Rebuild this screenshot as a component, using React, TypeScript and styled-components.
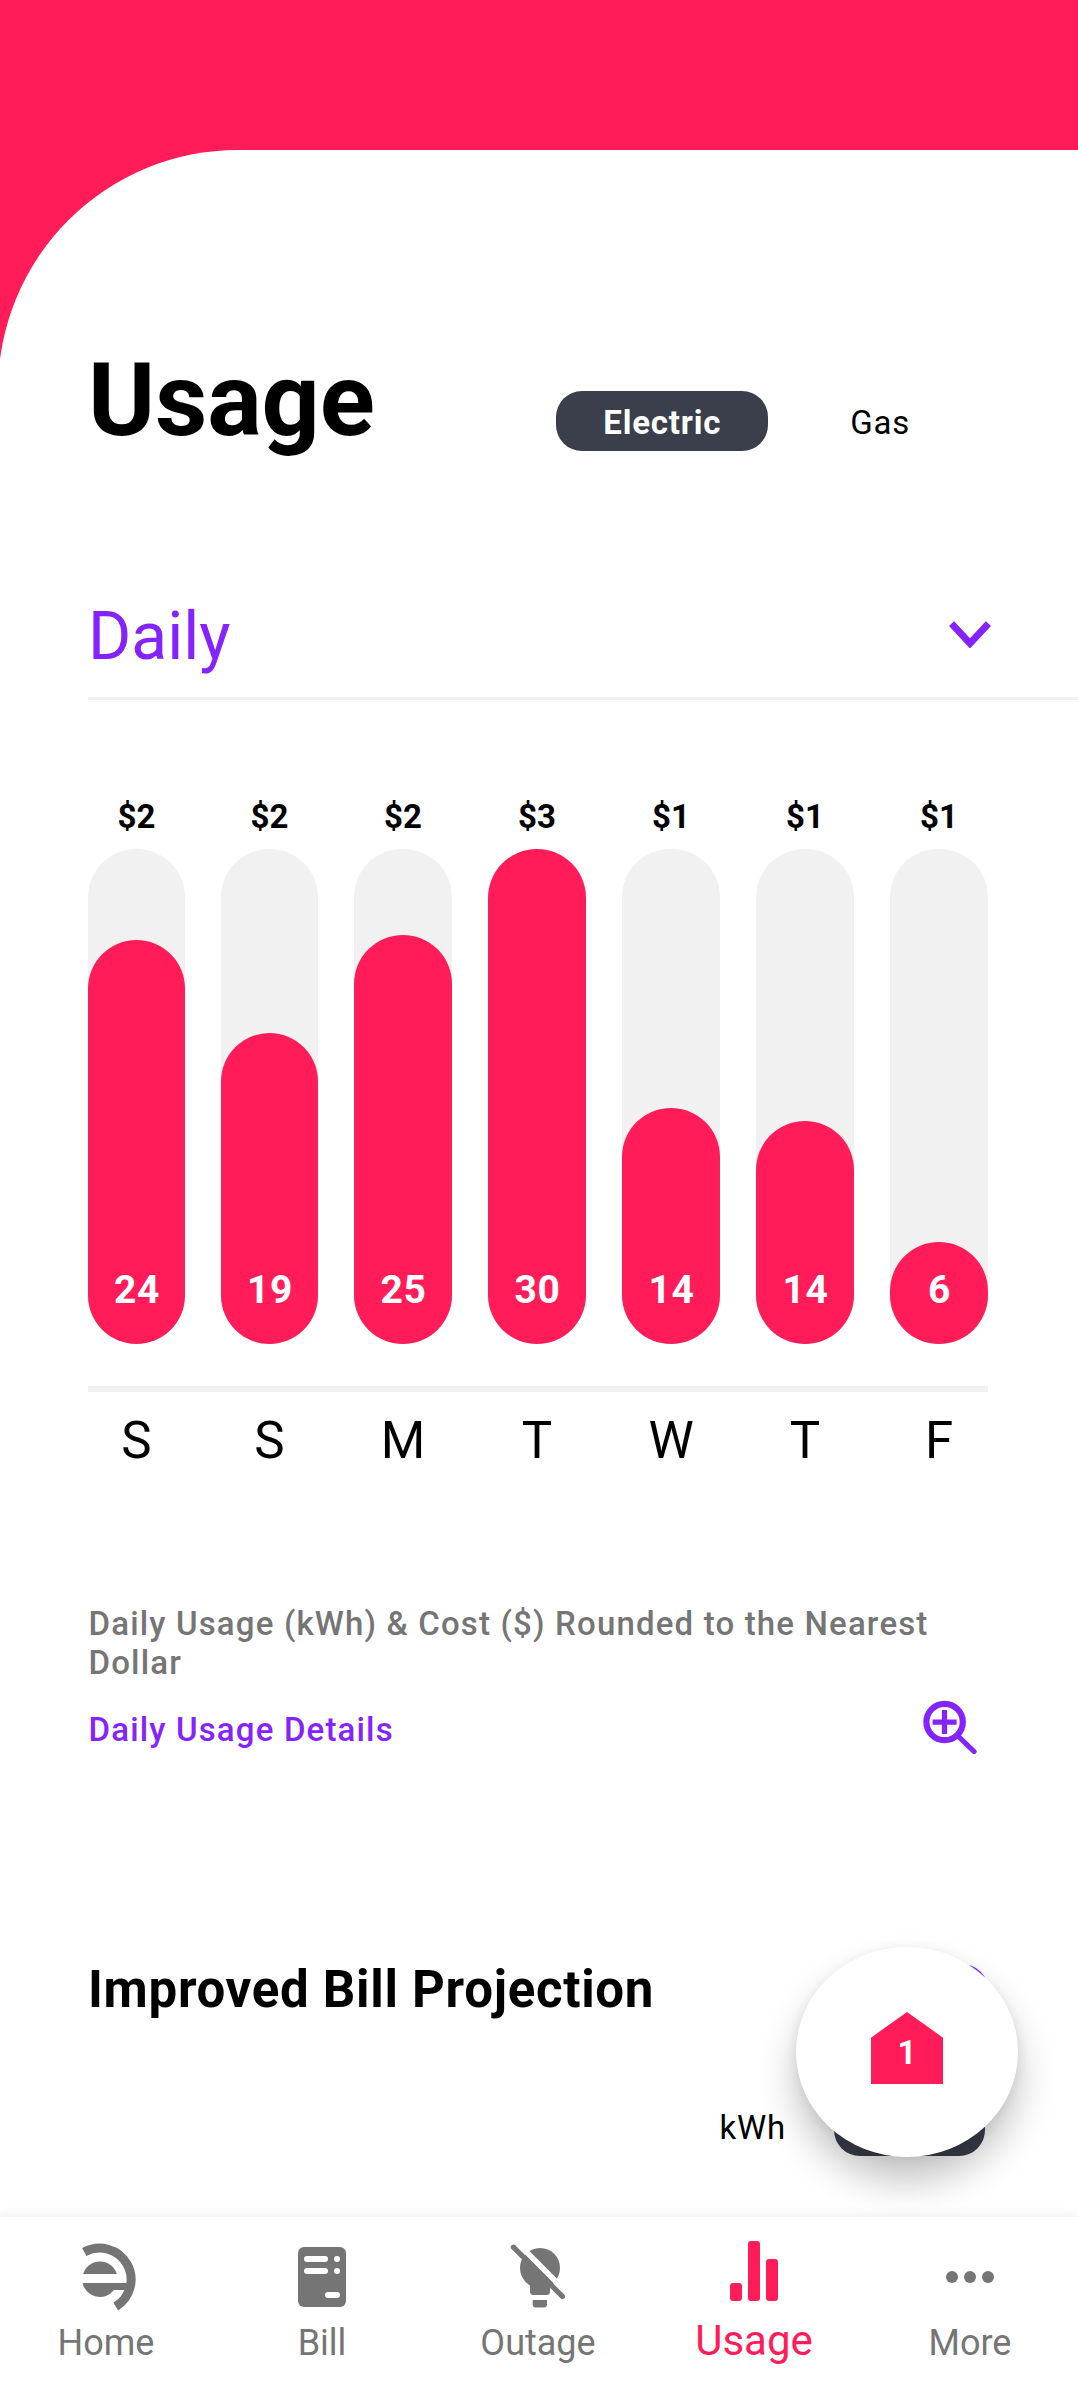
import React from "react";
import styled, { createGlobalStyle } from "styled-components";

const PINK = "#ff1c58";
const PURPLE = "#8523ff";
const SLATE = "#3b3f4c";
const GREY = "#757575";
const LINE = "#f1f1f1";

const Global = createGlobalStyle`
  * { box-sizing: border-box; }
  body { margin: 0; background: ${PINK}; font-family: Roboto, "Noto Sans", sans-serif; color: #000; }
`;

const Screen = styled.div`
  position: relative;
  display: flex;
  flex-direction: column;
  width: 1078px;
  height: 2383px;
  padding-top: 150px;
  overflow: hidden;
  background: ${PINK};
`;

const Sheet = styled.main`
  flex: 1;
  min-height: 0;
  margin-left: -2px;
  padding: 190px 0 0 90px;
  overflow: hidden;
  background: #fff;
  border-top-left-radius: 240px;
`;

const TitleRow = styled.header`
  display: flex;
  justify-content: space-between;
  height: 120px;
  padding-right: 92px;
`;

const Title = styled.h1`
  margin: 0;
  font-size: 102px;
  line-height: 120px;
  font-weight: 700;
  letter-spacing: -0.2px;
`;

const Toggle = styled.div<{ $top?: number }>`
  display: flex;
  gap: 6px;
  margin-top: ${(p) => p.$top ?? 0}px;
`;

const Option = styled.button<{ $active?: boolean; $width: number }>`
  width: ${(p) => p.$width}px;
  height: 60px;
  padding: 4px 0 0 0.5px;
  border: 0;
  border-radius: 26px;
  background: ${(p) => (p.$active ? SLATE : "transparent")};
  color: ${(p) => (p.$active ? "#fff" : "#000")};
  font-family: inherit;
  font-size: 33px;
  line-height: 56px;
  font-weight: ${(p) => (p.$active ? 700 : 400)};
  letter-spacing: 0.8px;
  text-align: center;
`;

const Select = styled.div`
  display: flex;
  justify-content: space-between;
  align-items: flex-start;
  height: 103px;
  margin-top: 137px;
  padding-right: 87px;
  border-bottom: 3px solid ${LINE};
  color: ${PURPLE};
  font-size: 66px;
  line-height: 80px;
`;

const Chevron = styled.svg`
  width: 42px;
  height: 27px;
  margin-top: 24px;
`;

const Chart = styled.section`
  width: 900px;
  padding-top: 97px;
`;

const Columns = styled.div`
  display: grid;
  grid-template-columns: 97px 97px repeat(5, 98px);
  column-gap: 36px;
`;

const Cost = styled.div`
  margin-bottom: 12px;
  font-size: 33px;
  line-height: 40px;
  font-weight: 700;
  text-align: center;
`;

const Track = styled.div`
  display: flex;
  flex-direction: column;
  justify-content: flex-end;
  height: 495px;
  border-radius: 48px;
  background: ${LINE};
`;

const Fill = styled.div`
  display: flex;
  align-items: flex-end;
  justify-content: center;
  padding: 0 0 31px 1px;
  border-radius: 49px;
  background: ${PINK};
  color: #fff;
  font-size: 39px;
  line-height: 46px;
  font-weight: 700;
  letter-spacing: 0.7px;
`;

const Axis = styled.div`
  height: 6px;
  margin: 42px 0 19px;
  background: ${LINE};
`;

const Day = styled.div`
  font-size: 51px;
  line-height: 60px;
  text-align: center;
`;

const Caption = styled.p`
  width: 900px;
  margin: 133px 0 18px;
  padding-left: 0.5px;
  color: ${GREY};
  font-size: 33px;
  line-height: 39px;
  font-weight: 500;
  letter-spacing: 1.16px;
`;

const DetailsRow = styled.div`
  display: flex;
  justify-content: space-between;
  height: 54px;
  padding-right: 101px;
`;

const DetailsLink = styled.a`
  padding: 10px 0 0 0.5px;
  color: ${PURPLE};
  font-size: 33px;
  line-height: 39px;
  font-weight: 500;
  letter-spacing: 1.16px;
`;

const ZoomIcon = styled.svg`
  width: 54px;
  height: 54px;
`;

const ProjectionRow = styled.div`
  display: flex;
  justify-content: space-between;
  height: 60px;
  margin-top: 206px;
  padding-right: 90.5px;
`;

const Heading = styled.h2`
  margin: 0;
  font-size: 51px;
  line-height: 60px;
  font-weight: 700;
  letter-spacing: 0.7px;
`;

const InfoIcon = styled.svg`
  width: 52px;
  height: 52px;
  margin-top: 3.5px;
`;

const UnitRow = styled.div`
  display: flex;
  justify-content: flex-end;
  margin-top: 76px;
  padding-right: 93px;
`;

const Fab = styled.button`
  position: absolute;
  left: 796px;
  top: 1947px;
  width: 222px;
  height: 210px;
  padding: 0;
  border: 0;
  border-radius: 50%;
  background: #fff;
  box-shadow: 0 24px 38px rgba(0, 0, 0, 0.24), 0 2px 12px rgba(0, 0, 0, 0.07);
`;

const House = styled.span`
  display: block;
  width: 72px;
  height: 72px;
  margin: 0 auto 8px;
  padding: 21px 0 0 0;
  clip-path: polygon(50% 0, 100% 35.6%, 100% 100%, 0 100%, 0 35.6%);
  background: ${PINK};
  color: #fff;
  font-family: Roboto, sans-serif;
  font-size: 33px;
  line-height: 40px;
  font-weight: 700;
  text-align: center;
`;

const Nav = styled.nav`
  position: relative;
  display: grid;
  grid-template-columns: repeat(5, 216px);
  flex: none;
  width: 1080px;
  height: 166px;
  margin-left: -2px;
  background: #fff;
  box-shadow: 0 0 12px rgba(0, 0, 0, 0.09);
`;

const Tab = styled.a<{ $active?: boolean }>`
  display: flex;
  flex-direction: column;
  align-items: center;
  padding-top: 22px;
  color: ${(p) => (p.$active ? PINK : GREY)};
`;

const TabIcon = styled.svg`
  display: block;
  width: 72px;
  height: 72px;
  fill: currentColor;
`;

const TabLabel = styled.span<{ $active?: boolean }>`
  margin-top: ${(p) => (p.$active ? 5 : 7)}px;
  font-size: ${(p) => (p.$active ? 42 : 36)}px;
  line-height: 50px;
`;

const days = [
  { day: "S", cost: "$2", usage: 24, height: 404 },
  { day: "S", cost: "$2", usage: 19, height: 311 },
  { day: "M", cost: "$2", usage: 25, height: 409 },
  { day: "T", cost: "$3", usage: 30, height: 495 },
  { day: "W", cost: "$1", usage: 14, height: 236 },
  { day: "T", cost: "$1", usage: 14, height: 223 },
  { day: "F", cost: "$1", usage: 6, height: 102 },
];

const tabs = [
  {
    label: "Home",
    icon: (
      <>
        <path d="M14.25 13.05A31.5 31.5 0 0 1 45.75 67.6" fill="none" stroke="currentColor" strokeWidth="9" />
        <path d="M13.1 35A17.7 17.7 0 0 1 46.9 35Z" />
        <path d="M12.6 44H58V51H44A17.7 17.7 0 0 1 12.6 44Z" />
      </>
    ),
  },
  {
    label: "Bill",
    icon: (
      <>
        <rect x="12" y="8" width="48" height="60" rx="6" />
        <g fill="#fff">
          <rect x="18" y="17" width="24" height="6" rx="3" />
          <rect x="48" y="17" width="6" height="6" rx="3" />
          <rect x="18" y="29" width="24" height="6" rx="3" />
          <rect x="48" y="29" width="6" height="6" rx="3" />
          <rect x="39" y="53" width="15" height="6" rx="3" />
        </g>
      </>
    ),
  },
  {
    label: "Outage",
    icon: (
      <>
        <circle cx="38" cy="29" r="20" />
        <path d="M28 42H48V52.5Q48 56 44.5 56H31.5Q28 56 28 52.5Z" />
        <path d="M30.7 61H45V65.5Q45 68.5 42 68.5H33.7Q30.7 68.5 30.7 65.5Z" />
        <path d="M15.2 3.6 64.2 52.9" stroke="#fff" strokeWidth="5.6" />
        <path d="M11.4 8.2 60.4 57.4" stroke="currentColor" strokeWidth="5.2" strokeLinecap="round" />
      </>
    ),
  },
  {
    label: "Usage",
    active: true,
    icon: (
      <>
        <rect x="12" y="44" width="12" height="18" rx="3" />
        <rect x="30" y="2" width="12" height="60" rx="3" />
        <rect x="48" y="20" width="12" height="42" rx="3" />
      </>
    ),
  },
  {
    label: "More",
    icon: (
      <>
        <circle cx="18" cy="38" r="6" />
        <circle cx="36" cy="38" r="6" />
        <circle cx="54" cy="38" r="6" />
      </>
    ),
  },
];

export default function App() {
  return (
    <>
      <Global />
      <Screen>
        <Sheet>
          <TitleRow>
            <Title>Usage</Title>
            <Toggle $top={51}>
              <Option $active $width={212}>Electric</Option>
              <Option $width={212}>Gas</Option>
            </Toggle>
          </TitleRow>

          <Select>
            <span>Daily</span>
            <Chevron viewBox="0 0 42 27">
              <path d="M2.6 2.6 21 22.4 39.4 2.6" fill="none" stroke={PURPLE} strokeWidth="7" />
            </Chevron>
          </Select>

          <Chart>
            <Columns>
              {days.map((d, i) => (
                <div key={i}>
                  <Cost>{d.cost}</Cost>
                  <Track>
                    <Fill style={{ height: d.height }}>{d.usage}</Fill>
                  </Track>
                </div>
              ))}
            </Columns>
            <Axis />
            <Columns>
              {days.map((d, i) => (
                <Day key={i}>{d.day}</Day>
              ))}
            </Columns>
          </Chart>

          <Caption>Daily Usage (kWh) &amp; Cost ($) Rounded to the Nearest Dollar</Caption>
          <DetailsRow>
            <DetailsLink>Daily Usage Details</DetailsLink>
            <ZoomIcon viewBox="0 0 54 54" fill="none" stroke={PURPLE}>
              <circle cx="21.6" cy="22" r="18.2" strokeWidth="6.2" />
              <path d="M9.6 22.2H33.6M21.5 10V34" strokeWidth="5.2" />
              <path d="M35 36 51 51.5" strokeWidth="5.2" strokeLinecap="round" />
            </ZoomIcon>
          </DetailsRow>

          <ProjectionRow>
            <Heading>Improved Bill Projection</Heading>
            <InfoIcon viewBox="0 0 52 52">
              <circle cx="26" cy="26" r="24" fill="none" stroke={PURPLE} strokeWidth="4" />
            </InfoIcon>
          </ProjectionRow>
          <UnitRow>
            <Toggle>
              <Option $width={151}>kWh</Option>
              <Option $active $width={151} />
            </Toggle>
          </UnitRow>
        </Sheet>

        <Fab>
          <House>1</House>
        </Fab>

        <Nav>
          {tabs.map((t) => (
            <Tab key={t.label} $active={t.active}>
              <TabIcon viewBox="0 0 72 72">{t.icon}</TabIcon>
              <TabLabel $active={t.active}>{t.label}</TabLabel>
            </Tab>
          ))}
        </Nav>
      </Screen>
    </>
  );
}
